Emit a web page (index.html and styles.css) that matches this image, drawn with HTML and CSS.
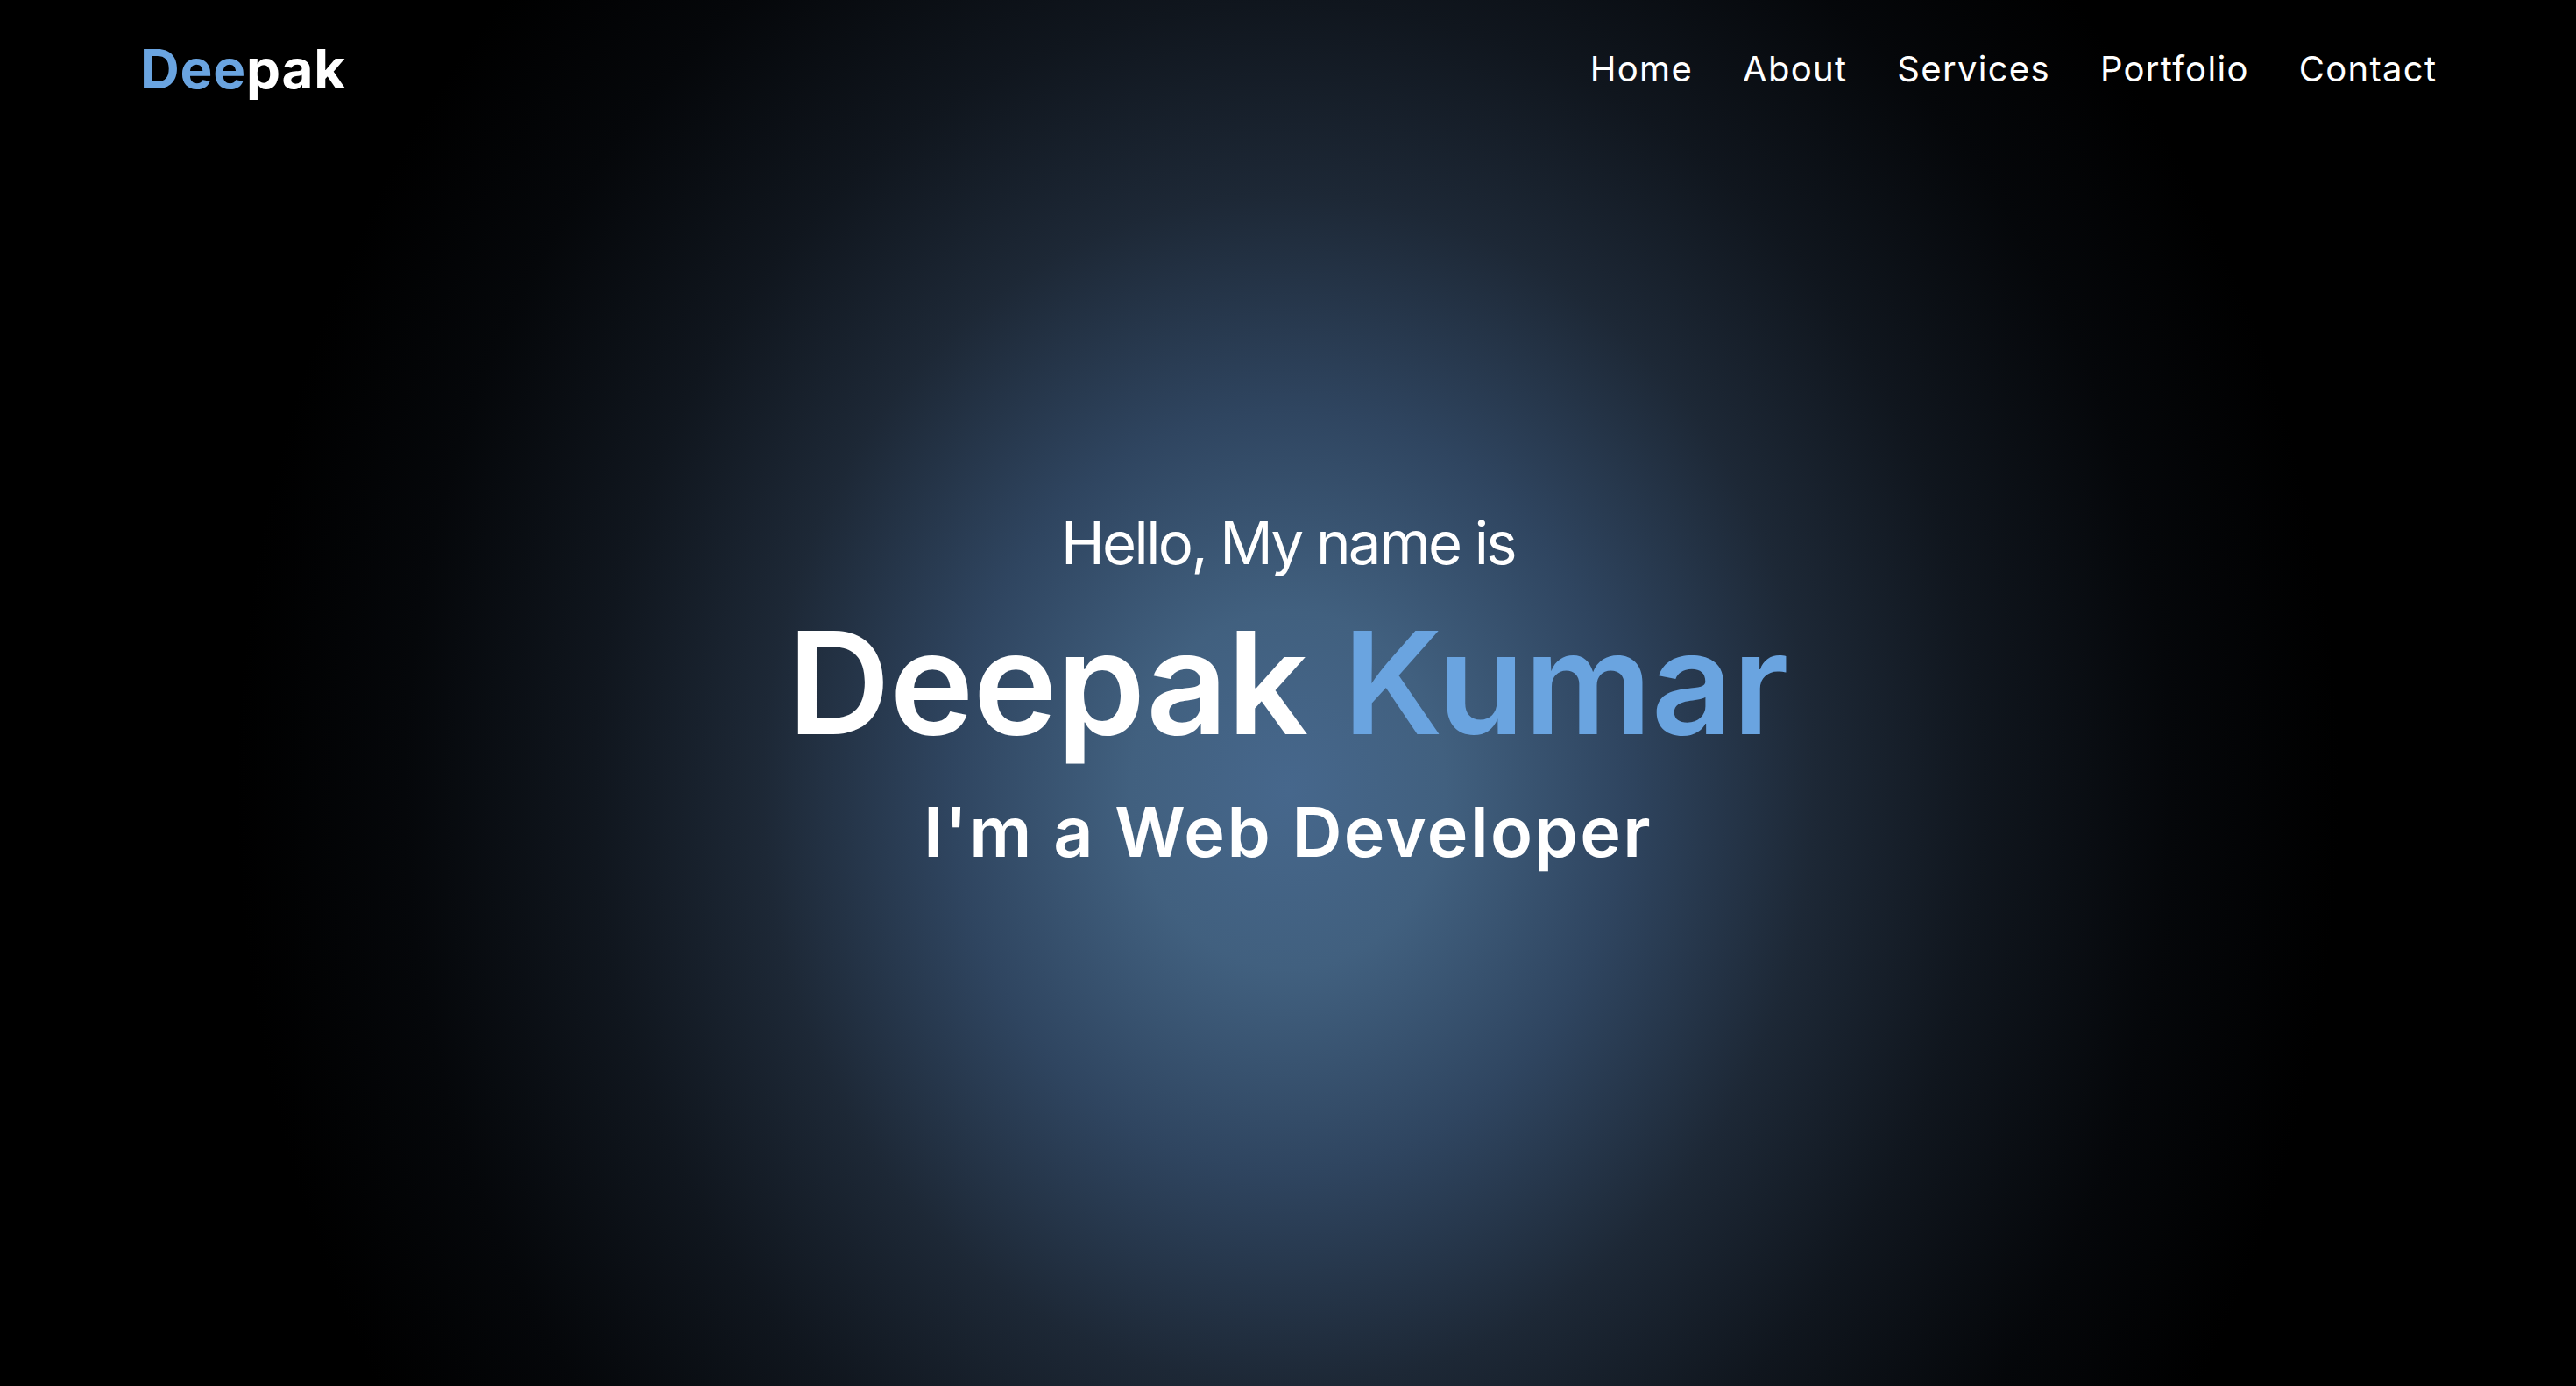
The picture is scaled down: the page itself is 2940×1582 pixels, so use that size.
FILE: index.html
```html
<!DOCTYPE html>
<html lang="en">
<head>
<meta charset="utf-8">
<title>Deepak Kumar</title>
<link rel="stylesheet" href="styles.css">
</head>
<body>
<div class="page">
  <header class="topbar">
    <a class="logo" href="#"><span class="accent">Dee</span>pak</a>
    <nav class="menu">
      <a href="#">Home</a>
      <a href="#">About</a>
      <a href="#">Services</a>
      <a href="#">Portfolio</a>
      <a href="#">Contact</a>
    </nav>
  </header>
  <main class="hero">
    <p class="hello">Hello, My name is</p>
    <h1 class="name">Deepak <span class="accent">Kumar</span></h1>
    <h2 class="role">I'm a Web Developer</h2>
  </main>
  <div class="spacer"></div>
</div>
</body>
</html>
```
FILE: styles.css
```css
* { box-sizing: border-box; }
html, body { margin: 0; padding: 0; height: 100%; }
body {
  font-family: "Inter", "Noto Sans", sans-serif;
  color: #fff;
  background: #000;
}
.page {
  height: 100vh;
  display: grid;
  grid-template-rows: 158px 1fr 165px;
  background: radial-gradient(ellipse 1200px 1360px at 50% 57%, #46678c 0%, #41607f 15%, #2f4560 32%, #1d2836 50%, #10161e 66%, #05070a 84%, #000 100%);
}
.topbar {
  display: flex;
  align-items: center;
  justify-content: space-between;
  padding: 0 160px;
}
.logo {
  font-size: 62px;
  line-height: 1;
  font-weight: 700;
  color: #fff;
  text-decoration: none;
  letter-spacing: 0.8px;
}
.accent { color: #6aa4e0; }
.menu {
  display: flex;
  gap: 57px;
}
.menu a {
  font-size: 40px;
  line-height: 1;
  font-weight: 400;
  color: #fff;
  text-decoration: none;
  letter-spacing: 1.3px;
}
.menu a:last-child { margin-right: -1.3px; }
.hero {
  display: flex;
  flex-direction: column;
  align-items: center;
  justify-content: center;
  text-align: center;
}
.hello {
  margin: 0;
  font-size: 67px;
  line-height: 1;
  font-weight: 400;
  letter-spacing: -2.6px;
}
.name {
  margin: 45px 0 0;
  font-size: 162px;
  line-height: 1;
  font-weight: 600;
  letter-spacing: -0.5px;
}
.role {
  margin: 50px 0 0;
  font-size: 79px;
  line-height: 1;
  font-weight: 600;
  letter-spacing: 2.4px;
}
```
